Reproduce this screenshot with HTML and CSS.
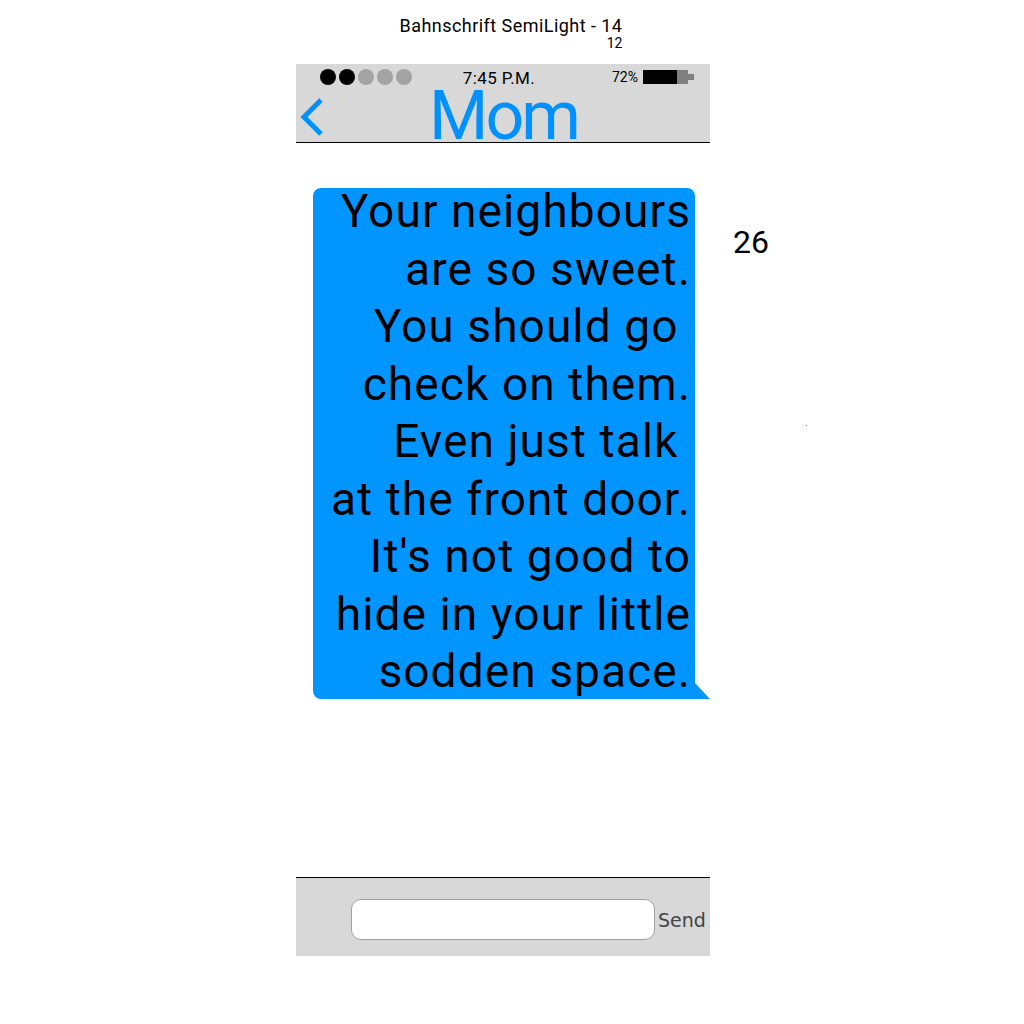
FILE: index.html
```html
<!DOCTYPE html>
<html>
<head>
<meta charset="utf-8">
<link rel="stylesheet" href="styles.css">
</head>
<body>
<div class="page">
  <div class="caption">
    <div class="caption-inner">
      <div class="caption-main">Bahnschrift SemiLight - 14</div>
      <div class="caption-sub">12</div>
    </div>
  </div>
  <div class="phone">
    <div class="header">
      <div class="status">
        <div class="dots">
          <span class="dot on"></span><span class="dot on"></span><span class="dot"></span><span class="dot"></span><span class="dot"></span>
        </div>
        <div class="time">7:45 P.M.</div>
        <div class="battery-wrap">
          <span class="pct">72%</span>
          <span class="battery"><span class="fill"></span><span class="empty"></span><span class="nub"></span></span>
        </div>
      </div>
      <div class="titlebar">
        <svg class="back" width="26" height="40" viewBox="0 0 26 40"><polyline points="22,3 5,20 22,37" fill="none" stroke="#0091ff" stroke-width="5"/></svg>
        <div class="title">Mom</div>
      </div>
    </div>
    <div class="chat">
      <div class="bubble">
        <div class="msg">Your neighbours
are so sweet.
You should go 
check on them.
Even just talk 
at the front door.
It's not good to
hide in your little
sodden space.</div>
        <span class="tail"></span>
      </div>
      <div class="count">26</div>
      <span class="speck"></span>
    </div>
    <div class="footer">
      <div class="input"></div>
      <div class="send">Send</div>
    </div>
  </div>
</div>
</body>
</html>
```
FILE: styles.css
```css
html, body {
  margin: 0;
  padding: 0;
  background: #fff;
}
body {
  font-family: Roboto, "Liberation Sans", sans-serif;
  color: #000;
}
.page {
  width: 414px;
  margin-left: 296px;
}
.caption {
  height: 64px;
  display: flex;
  justify-content: center;
  padding-left: 16px;
  box-sizing: border-box;
}
.caption-inner {
  padding-top: 15px;
  display: flex;
  flex-direction: column;
}
.caption-main {
  font-size: 18px;
  letter-spacing: 0.45px;
  line-height: 22px;
}
.caption-sub {
  font-size: 14px;
  line-height: 13px;
  text-align: right;
}
.phone {
  position: relative;
}
.header {
  background: #d8d8d8;
  height: 78px;
  border-bottom: 1px solid #000;
  display: flex;
  flex-direction: column;
}
.status {
  height: 26px;
  display: flex;
  align-items: center;
  padding: 0 16px 0 24px;
}
.dots {
  display: flex;
  gap: 3px;
  width: 124px;
}
.dot {
  width: 16px;
  height: 16px;
  border-radius: 50%;
  background: #a3a3a3;
}
.dot.on {
  background: #000;
}
.time {
  font-size: 17px;
  letter-spacing: 0.4px;
  width: 110px;
  text-align: center;
  line-height: 20px;
  padding-top: 2px;
}
.battery-wrap {
  margin-left: auto;
  display: flex;
  align-items: center;
  gap: 5px;
}
.pct {
  font-size: 14px;
}
.battery {
  display: flex;
  align-items: center;
}
.battery .fill {
  width: 34px;
  height: 14px;
  background: #000;
}
.battery .empty {
  width: 11px;
  height: 14px;
  background: #808080;
}
.battery .nub {
  width: 6px;
  height: 6px;
  background: #808080;
}
.titlebar {
  flex: 1;
  position: relative;
  display: flex;
  justify-content: center;
  align-items: flex-start;
}
.back {
  position: absolute;
  left: 3px;
  bottom: 5px;
}
.title {
  color: #0091ff;
  font-size: 68px;
  letter-spacing: -3px;
  line-height: 52px;
  margin-left: 1px;
}
.chat {
  height: 735px;
  border-bottom: 1px solid #000;
  position: relative;
  padding-top: 45px;
  box-sizing: border-box;
}
.bubble {
  position: relative;
  margin-left: 17px;
  width: 382px;
  height: 511px;
  background: #0095ff;
  border-radius: 8px 8px 0 8px;
}
.msg {
  white-space: pre;
  text-align: right;
  font-size: 46px;
  letter-spacing: 1.1px;
  line-height: 57.5px;
  padding-right: 4px;
  position: relative;
  top: -5px;
}
.tail {
  position: absolute;
  right: -15px;
  bottom: 0;
  width: 0;
  height: 0;
  border-left: 15px solid #0095ff;
  border-top: 16px solid transparent;
}
.count {
  position: absolute;
  left: 437px;
  top: 80px;
  font-size: 32px;
}
.speck {
  position: absolute;
  left: 510px;
  top: 282px;
  width: 1px;
  height: 1px;
  background: #0095ff;
}
.footer {
  background: #d8d8d8;
  height: 78px;
  display: flex;
  align-items: center;
  padding-left: 55px;
  box-sizing: border-box;
}
.input {
  width: 302px;
  height: 39px;
  background: #fff;
  border: 1px solid #a0a0a0;
  border-radius: 10px;
  margin-top: 4px;
}
.send {
  font-family: "DejaVu Sans", sans-serif;
  font-size: 19px;
  color: #444;
  margin-left: 3px;
  margin-top: 6px;
}
```
